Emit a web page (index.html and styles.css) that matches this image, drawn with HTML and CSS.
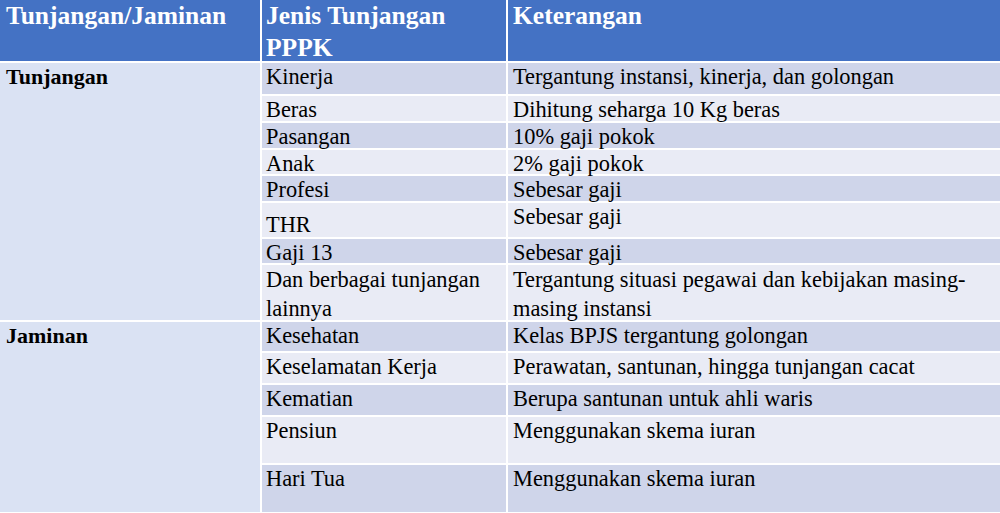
FILE: index.html
```html
<!DOCTYPE html>
<html lang="id">
<head>
<meta charset="utf-8">
<title>Tunjangan dan Jaminan PPPK</title>
<link rel="stylesheet" href="styles.css">
</head>
<body>
<div class="table">
  <div class="th c1">Tunjangan/Jaminan</div>
  <div class="th c2">Jenis Tunjangan PPPK</div>
  <div class="th c3">Keterangan</div>

  <div class="group g-tunjangan">Tunjangan</div>
  <div class="cell c2 dark">Kinerja</div>
  <div class="cell c3 dark">Tergantung instansi, kinerja, dan golongan</div>
  <div class="cell c2 light">Beras</div>
  <div class="cell c3 light">Dihitung seharga 10 Kg beras</div>
  <div class="cell c2 dark">Pasangan</div>
  <div class="cell c3 dark">10% gaji pokok</div>
  <div class="cell c2 light">Anak</div>
  <div class="cell c3 light">2% gaji pokok</div>
  <div class="cell c2 dark">Profesi</div>
  <div class="cell c3 dark">Sebesar gaji</div>
  <div class="cell c2 light low">THR</div>
  <div class="cell c3 light">Sebesar gaji</div>
  <div class="cell c2 dark">Gaji 13</div>
  <div class="cell c3 dark">Sebesar gaji</div>
  <div class="cell c2 light multi">Dan berbagai tunjangan lainnya</div>
  <div class="cell c3 light multi">Tergantung situasi pegawai dan kebijakan masing-masing instansi</div>

  <div class="group g-jaminan">Jaminan</div>
  <div class="cell c2 dark">Kesehatan</div>
  <div class="cell c3 dark">Kelas BPJS tergantung golongan</div>
  <div class="cell c2 light">Keselamatan Kerja</div>
  <div class="cell c3 light">Perawatan, santunan, hingga tunjangan cacat</div>
  <div class="cell c2 dark">Kematian</div>
  <div class="cell c3 dark">Berupa santunan untuk ahli waris</div>
  <div class="cell c2 light">Pensiun</div>
  <div class="cell c3 light">Menggunakan skema iuran</div>
  <div class="cell c2 dark">Hari Tua</div>
  <div class="cell c3 dark">Menggunakan skema iuran</div>
</div>
</body>
</html>
```

FILE: styles.css
```css
html, body {
  margin: 0;
  padding: 0;
  background: #ffffff;
}

body {
  width: 1000px;
  height: 513px;
  overflow: hidden;
  font-family: "Liberation Serif", "Times New Roman", serif;
  color: #000000;
}

.table {
  display: grid;
  grid-template-columns: 260px 244px 1fr;
  grid-template-rows: 61px 31px 25px 25px 24px 25px 34px 24px 55px 29px 30px 30px 46px 47px;
  gap: 2px;
  background: #ffffff;
  width: 1000px;
}

.th {
  background: #4472c4;
  color: #ffffff;
  font-weight: bold;
  font-size: 25.5px;
  line-height: 32px;
}

.th.c1 { padding-left: 6px; }
.th.c2 { padding-left: 4px; padding-right: 4px; }
.th.c3 { padding-left: 5px; }

.cell {
  font-size: 22.4px;
  line-height: 22px;
  padding-top: 3px;
}

.cell.multi {
  line-height: 29px;
  padding-top: 0;
}

.c2 { grid-column: 2; padding-left: 4px; padding-right: 6px; }
.c3 { grid-column: 3; padding-left: 5px; padding-right: 20px; }

.dark { background: #cfd5ea; }
.light { background: #e9ebf5; }

.cell.low { padding-top: 11px; }

.group {
  grid-column: 1;
  background: #dae2f3;
  font-weight: bold;
  font-size: 22px;
  line-height: 22px;
  padding-top: 3px;
  padding-left: 6px;
}

.g-tunjangan { grid-row: 2 / span 8; }
.g-jaminan { grid-row: 10 / span 5; }
```
